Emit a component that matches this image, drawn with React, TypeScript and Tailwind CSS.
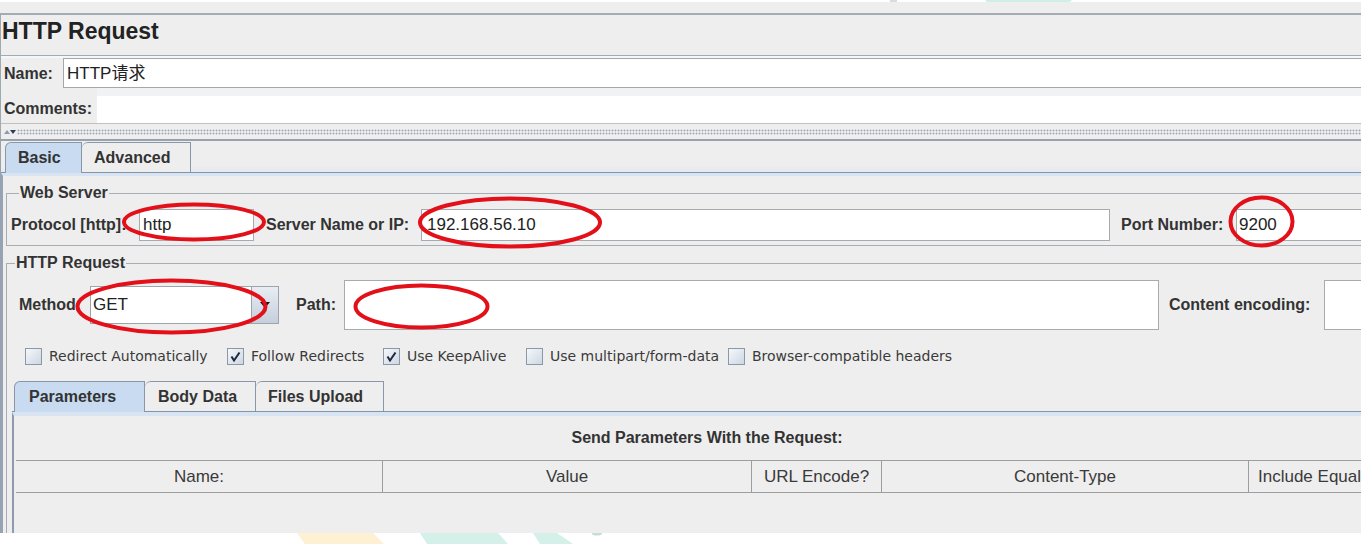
import React from "react";

const label = "font-['Liberation_Sans',Arial,sans-serif] font-bold text-[16px] text-[#333333] whitespace-nowrap";
const fieldText = "font-['Liberation_Sans','Noto_Sans_CJK_SC',Arial,sans-serif] text-[17px] text-[#222222] whitespace-nowrap";
const checkLabel = "font-['DejaVu_Sans',sans-serif] text-[14px] text-[#3a3a3a] whitespace-nowrap";

const checks = [
  { text: "Redirect Automatically", on: false, w: "w-[202px]" },
  { text: "Follow Redirects", on: true, w: "w-[156px]" },
  { text: "Use KeepAlive", on: true, w: "w-[143px]" },
  { text: "Use multipart/form-data", on: false, w: "w-[202px]" },
  { text: "Browser-compatible headers", on: false, w: "w-[240px]" },
];

const columns = [
  { name: "Name:", w: "w-[367px]" },
  { name: "Value", w: "w-[369px]" },
  { name: "URL Encode?", w: "w-[130px]" },
  { name: "Content-Type", w: "w-[367px]" },
  { name: "Include Equals?", w: "w-[140px]" },
];

function Checkbox({ on }: { on: boolean }) {
  return (
    <span className="flex h-[17px] w-[17px] shrink-0 items-center justify-center border border-[#8d98a6] bg-linear-to-br from-[#f5f8fb] to-[#cdd7e3]">
      {on && (
        <svg width="11" height="11" viewBox="0 0 11 11">
          <path d="M1.5 5.5 L4 9.5 L9.5 1.5" fill="none" stroke="#1d2a3c" strokeWidth="2" />
        </svg>
      )}
    </span>
  );
}

export default function App() {
  return (
    <div className="relative flex h-[544px] w-[1368px] flex-col overflow-hidden bg-white">
      {/* page background strip above the screenshot */}
      <svg width="1368" height="2" className="block shrink-0">
        <polygon points="985,0 1072,0 1070,2 987,2" fill="#cfeee7" />
        <rect x="890" y="0" width="7" height="2" fill="#d6dce1" />
      </svg>

      <div className="flex h-[531px] w-[1361px] shrink-0 flex-col overflow-hidden bg-[#eeeeee]">
        <div className="h-[11px] shrink-0" />

        <div className="flex shrink-0 flex-col border-l border-[#a0a8b0]">
          {/* title */}
          <div className="h-[42px] border-t-2 border-[#a4abb2] pl-[1px] pt-[3px]">
            <h1 className="font-['Liberation_Sans',Arial,sans-serif] text-[23px] leading-[27px] font-bold text-[#222222]">
              HTTP Request
            </h1>
          </div>
          <div className="h-[3px] border-t border-[#a4abb2] bg-[#f4f6f8]" />

          {/* name */}
          <div className="flex h-[30px] items-stretch">
            <div className={`flex w-[62px] items-center pt-[1px] pl-[3px] ${label}`}>Name:</div>
            <div className={`flex flex-1 items-center border-t border-b border-l border-[#a2a8ae] bg-white pt-[1px] pl-[3px] ${fieldText}`}>
              HTTP请求
            </div>
          </div>

          {/* comments */}
          <div className="flex h-[36px] items-stretch border-b border-[#c3c1bb]">
            <div className={`flex w-[96px] items-center pl-[3px] pt-[7px] ${label}`}>Comments:</div>
            <div className="flex-1 border-t-[8px] border-[#f1f2f4] bg-white" />
          </div>

          {/* split pane divider */}
          <div className="flex h-[15px] items-center gap-[1px] pl-[3px]">
            <svg width="12" height="6" viewBox="0 0 12 6" className="shrink-0">
              <polygon points="0,5 3,1 6,5" fill="#8f9aa6" />
              <polygon points="6,1 12,1 9,5" fill="#2d3d57" />
            </svg>
            <div className="h-[6px] flex-1 bg-[radial-gradient(circle,#9ba6b2_0.7px,transparent_1.2px)] bg-[length:3px_3px]" />
          </div>
        </div>

        <div className="flex flex-1 flex-col border-t-2 border-l border-[#99a2ac]">
          {/* main tabs */}
          <div className="flex h-[32px] shrink-0 items-end border-b border-[#8094ae] bg-linear-to-b from-[#eeeeee] from-80% to-[#e6e8f2] pl-[4px]">
            <div className={`relative -mb-px flex h-[31px] w-[77px] items-center rounded-tl-[6px] border border-b-0 border-[#8a97a8] bg-[#c8dbf1] pl-[12px] ${label}`}>
              Basic
            </div>
            <div className={`flex h-[30px] w-[109px] items-center rounded-tl-[6px] border border-b-0 border-l-0 border-[#8a97a8] bg-[#eeeeee] pl-[12px] ${label}`}>
              Advanced
            </div>
          </div>

          <div className="flex flex-1 flex-col border-t-[3px] border-l-2 border-t-[#d9e4f3] border-l-[#94a3b6] pl-[3px]">
            {/* Web Server */}
            <fieldset className="mt-[8px] w-[1500px] shrink-0 border border-[#a9aeb4] pt-[7px] pb-[4px] pl-[4px]">
              <legend className={`ml-[8px] px-[1px] leading-[18px] ${label}`}>Web Server</legend>
              <div className="flex h-[32px] items-center">
                <div className={`w-[128px] ${label}`}>Protocol [http]:</div>
                <div className={`flex h-[32px] w-[115px] items-center border border-[#a6abb0] bg-white pl-[3px] ${fieldText}`}>http</div>
                <div className={`ml-[12px] w-[155px] ${label}`}>Server Name or IP:</div>
                <div className={`flex h-[32px] w-[689px] items-center border border-[#a6abb0] bg-white pl-[5px] ${fieldText}`}>192.168.56.10</div>
                <div className={`ml-[11px] w-[115px] ${label}`}>Port Number:</div>
                <div className={`flex h-[32px] w-[300px] items-center border border-[#a6abb0] bg-white pl-[2px] ${fieldText}`}>9200</div>
              </div>
            </fieldset>

            {/* HTTP Request */}
            <fieldset className="mt-[8px] flex w-[1500px] flex-1 flex-col border border-b-0 border-[#a9aeb4] pt-[8px]">
              <legend className={`ml-[8px] px-[1px] leading-[18px] ${label}`}>HTTP Request</legend>
              <div className="flex h-[50px] items-center pl-[12px]">
                <div className={`w-[71px] ${label}`}>Method:</div>
                <div className="flex h-[38px] w-[189px]">
                  <div className={`flex flex-1 items-center border border-[#9da4ac] bg-white pl-[2px] ${fieldText}`}>GET</div>
                  <div className="flex w-[27px] items-center justify-center border border-l-0 border-[#9da4ac] bg-linear-to-b from-[#e8edf3] to-[#c5cfdb]">
                    <svg width="10" height="6" viewBox="0 0 10 6">
                      <polygon points="0,0 10,0 5,6" fill="#111111" />
                    </svg>
                  </div>
                </div>
                <div className={`ml-[17px] w-[48px] ${label}`}>Path:</div>
                <div className="h-[50px] w-[815px] border border-[#a6abb0] bg-white" />
                <div className={`ml-[10px] w-[155px] ${label}`}>Content encoding:</div>
                <div className="h-[50px] w-[200px] border border-[#a6abb0] bg-white" />
              </div>

              <div className="mt-[17px] flex h-[18px] items-center pl-[18px]">
                {checks.map((c) => (
                  <div key={c.text} className={`flex shrink-0 items-center gap-[7px] ${c.w}`}>
                    <Checkbox on={c.on} />
                    <span className={checkLabel}>{c.text}</span>
                  </div>
                ))}
              </div>

              {/* inner tabs */}
              <div className="mt-[17px] ml-[5px] flex flex-1 flex-col">
                <div className="flex h-[30px] shrink-0 items-end border-b border-[#8094ae] pl-[2px]">
                  <div className={`relative -mb-px flex h-[31px] w-[131px] items-center rounded-tl-[6px] border border-b-0 border-[#8a97a8] bg-[#c8dbf1] pl-[14px] ${label}`}>
                    Parameters
                  </div>
                  <div className={`flex h-[30px] w-[111px] items-center rounded-tl-[6px] border border-b-0 border-l-0 border-[#8a97a8] bg-[#eeeeee] pl-[13px] ${label}`}>
                    Body Data
                  </div>
                  <div className={`flex h-[30px] w-[128px] items-center rounded-tl-[6px] border border-b-0 border-l-0 border-[#8a97a8] bg-[#eeeeee] pl-[12px] ${label}`}>
                    Files Upload
                  </div>
                </div>
                <div className="flex flex-1 flex-col border-t-[4px] border-l-2 border-t-[#d9e4f3] border-l-[#8d9cb0]">
                  <div className={`mt-[12px] h-[20px] w-[1386px] text-center leading-[20px] ${label}`}>
                    Send Parameters With the Request:
                  </div>
                  <div className="mt-[12px] ml-[2px] flex h-[33px] border-t border-b border-[#9d9d9d]">
                    {columns.map((col) => (
                      <div
                        key={col.name}
                        className={`flex shrink-0 items-center justify-center border-r border-[#9d9d9d] font-['Liberation_Sans',Arial,sans-serif] text-[17px] text-[#3a3a3a] ${col.w}`}
                      >
                        {col.name}
                      </div>
                    ))}
                  </div>
                </div>
              </div>
            </fieldset>
          </div>
        </div>
      </div>

      {/* page background strip below the screenshot */}
      <svg width="1368" height="11" className="block shrink-0">
        <polygon points="297,0 373,0 384,11 305,11" fill="#fdf0d3" />
        <polygon points="420,0 498,0 508,11 427,11" fill="#d4f0e9" />
        <polygon points="533,0 557,0 573,11 540,11" fill="#d4f0e9" />
        <ellipse cx="597" cy="0.5" rx="5" ry="2" fill="#c9ddd8" />
      </svg>

      {/* red annotation marks */}
      <svg width="1368" height="544" className="pointer-events-none absolute inset-0">
        <g fill="none" stroke="#e3101a" strokeWidth="4">
          <ellipse cx="194" cy="222" rx="70" ry="17.5" />
          <ellipse cx="510" cy="222.5" rx="90" ry="24" />
          <ellipse cx="1261.5" cy="221.5" rx="31" ry="24" />
          <ellipse cx="171.5" cy="306.5" rx="94" ry="26" />
          <ellipse cx="421.5" cy="306.5" rx="66" ry="21" />
        </g>
      </svg>
    </div>
  );
}
